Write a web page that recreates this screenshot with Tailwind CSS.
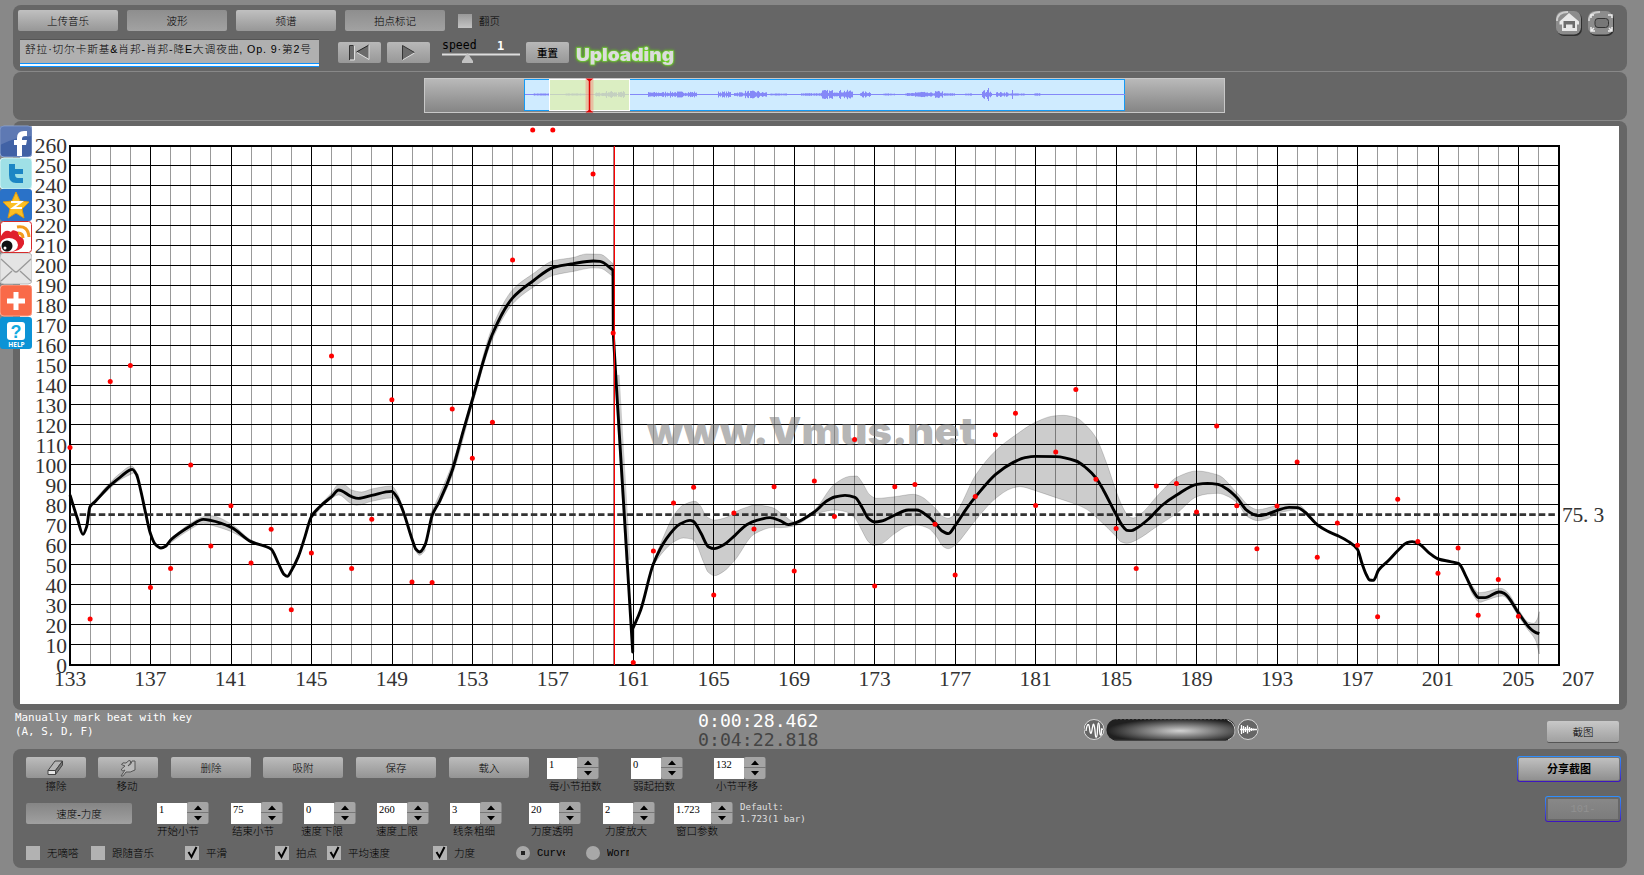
<!DOCTYPE html>
<html lang="zh">
<head>
<meta charset="utf-8">
<title>Vmus.net</title>
<script src="https://cdn.jsdelivr.net/npm/@tailwindcss/browser@4"></script>
</head>
<body class="relative flex h-[875px] w-[1644px] flex-col overflow-hidden bg-[#888888] pt-[5px] pl-[13px] font-['Liberation_Sans','Noto_Sans_CJK_SC',sans-serif] text-[10.5px] leading-none font-light text-black">

<!-- toolbar -->
<header class="flex h-[66px] w-[1614px] justify-between rounded-[8px] bg-[#666666]">
  <div class="pl-[5px] pt-[5px]">
    <div class="flex h-[21px] items-center gap-[9px]">
      <button class="h-[21px] w-[100px] rounded-[2px] bg-linear-to-b from-[#c0c0c0] to-[#979797] pt-px">上传音乐</button>
      <button class="h-[21px] w-[100px] rounded-[2px] bg-linear-to-b from-[#8e8e8e] to-[#a2a2a2] pt-px">波形</button>
      <button class="h-[21px] w-[100px] rounded-[2px] bg-linear-to-b from-[#c0c0c0] to-[#979797] pt-px">频谱</button>
      <button class="h-[21px] w-[100px] rounded-[2px] bg-linear-to-b from-[#8e8e8e] to-[#a2a2a2] pt-px">拍点标记</button>
      <span class="ml-1 size-[14px] bg-linear-to-b from-[#999] to-[#c4c4c4]"></span>
      <span class="-ml-[2px] pt-px">翻页</span>
    </div>
    <div class="mt-[8px] flex pl-[2px]">
      <div class="h-[28px] w-[299px] border-t border-b border-t-[#555] border-b-[#0a91ff] bg-[#b0b0b0] pt-[3px] pl-[5px] text-[10.7px] whitespace-pre shadow-[inset_0_-2px_0_#f4faff,inset_0_-3px_0_#0a91ff]"><svg class="overflow-visible" width="290" height="14"><text x="0" y="10" textLength="286" lengthAdjust="spacing">舒拉·切尔卡斯基&amp;肖邦-肖邦-降E大调夜曲, Op. 9·第2号</text></svg></div>
      <button class="mt-[3px] ml-[19px] h-[21px] w-[43px] rounded-[2px] bg-linear-to-b from-[#b8b8b8] to-[#989898]">
        <svg width="43" height="21"><path d="M11.500 18V3.500h4" fill="none" stroke="#333"/><path d="M12 4h4v13.500h-4z" fill="#6b6b6b"/><path d="M31 3 18.500 10l12.500 7z" fill="#6b6b6b"/><path d="M31 3 18.500 10" stroke="#222"/><path d="M31 3v14.500L19 10.500M16.500 4v14H12" fill="none" stroke="#ddd"/></svg>
      </button>
      <button class="mt-[3px] ml-[6px] h-[21px] w-[43px] rounded-[2px] bg-linear-to-b from-[#b8b8b8] to-[#989898]">
        <svg width="43" height="21"><path d="M15.500 3.500v14.500l12-7.500z" fill="#6b6b6b"/><path d="M15.500 18V3.500l12 7" fill="none" stroke="#333"/><path d="M15.500 18l12-7" stroke="#ddd"/></svg>
      </button>
      <svg class="ml-[10px] overflow-visible font-['DejaVu_Sans_Mono',monospace]" width="90" height="28"><text x="2" y="10" font-size="11.5">speed</text><text x="57" y="10.500" font-size="12" fill="#fff" font-weight="bold">1</text><path d="M2 15.500h78" stroke="#ddd" stroke-width="2"/><path d="M27.500 14l5.500 8v2H22v-2z" fill="#c2c2c2"/></svg>
      <button class="mt-[3px] -ml-[4px] h-[21px] w-[43px] rounded-[2px] bg-linear-to-b from-[#b8b8b8] to-[#989898] pt-px font-medium">重置</button>
      <svg class="overflow-visible drop-shadow-[0_0_1.5px_#5fe000]" width="110" height="28"><text x="7" y="22" font-family="Inter" font-weight="900" font-size="18" textLength="98" lengthAdjust="spacingAndGlyphs" fill="#dcdcdc" stroke="#78d838" stroke-width="1.500" paint-order="stroke" stroke-opacity=".6">Uploading</text></svg>
    </div>
  </div>
  <div class="flex gap-[6px] pt-[6px] pr-[13px]">
    <svg width="26" height="25"><rect x="1" y="1" width="25" height="24" rx="7" fill="#2f2f2f"/><rect width="25" height="23.500" rx="7" fill="#8c8c8c"/><path d="M1 10Q1 1 12 1" fill="none" stroke="#ccc" stroke-width="2"/><path d="M13 2 3.500 10.500v3H6V20h15v-6.500h2v-3z" fill="#e8e8e8"/><path d="M7.500 10h11.500v7h-2.500v-3.500h-6.500V17H7.500z" fill="#6c6c6c"/></svg>
    <svg width="26" height="25"><rect x="1" y="1" width="25" height="24" rx="7" fill="#2f2f2f"/><rect width="25" height="23.500" rx="7" fill="#8c8c8c"/><path d="M1 10Q1 1 12 1" fill="none" stroke="#ccc" stroke-width="2"/><rect x="7" y="7.500" width="13.500" height="9" rx="3" fill="#777" stroke="#333"/><path d="M3 7V4h3M24 7V4h-4M3 16v4h4M24 16v4h-4M3 20l3-3M24 20l-3-3" fill="none" stroke="#eee" stroke-width="1.500"/></svg>
  </div>
</header>

<!-- overview strip -->
<section class="mt-px h-[48px] w-[1614px] rounded-[8px] bg-[#666666] pt-[6px] pl-[411px]">
  <div class="h-[35px] w-[801px] border border-[#c8c8c8] bg-linear-to-b from-[#b9b9b9] to-[#858585]">
    <svg id="overview" class="overflow-visible" width="799" height="33">
      <rect x="99.500" y=".5" width="600" height="31" fill="#cfebff" stroke="#149af5"/>
      <path id="wave" stroke="#8488f8" fill="none"/>
      <rect x="124.500" y=".5" width="80" height="31" fill="#e0f0a8" fill-opacity=".7" stroke="#fff"/>
      <path d="M164.500 0v33" stroke="#f66" stroke-opacity=".35" stroke-width="8"/>
      <path d="M164.500 0v33" stroke="#e00000" stroke-width="1.500"/><path d="M160.500-.5h8l-4 3zM160.500 33.500h8l-4-3z" fill="#e00000"/>
    </svg>
  </div>
</section>

<!-- tempo chart -->
<main class="mt-px h-[589px] w-[1614px] rounded-[8px] bg-[#666666] pt-[5px] pl-[7px]">
  <svg id="chart" class="bg-white font-['Liberation_Serif',serif]" width="1599" height="578" viewBox="20 126 1599 578">
    <g id="grid" shape-rendering="crispEdges"></g>
    <rect x="70" y="146" width="1489" height="519" fill="none" stroke="#000" stroke-width="2"/>
    <text x="647" y="445" font-family="Inter" font-weight="900" font-size="38" textLength="329" lengthAdjust="spacingAndGlyphs" fill="#777" fill-opacity=".55">www.Vmus.net</text>
    <g id="bands" fill="#000" fill-opacity=".2" stroke="#000" stroke-opacity=".2" stroke-width=".8"></g>
    <path d="M70 514.700H1558" stroke="#333" stroke-width="2.800" stroke-dasharray="6.500 3.100"/>
    <path id="tempo" fill="none" stroke="#000" stroke-width="2.900" stroke-linejoin="round"/>
    <path d="M614.400 146v519" stroke="#f00" stroke-width="1.200"/>
    <g id="dots" fill="#ff0000"></g>
    <g id="labels" font-size="21.500" fill="#333"></g>
    <text x="1562 1572.500 1583 1593.500" y="521.500" font-size="21.500" fill="#333">75.3</text>
  </svg>
</main>

<!-- status row -->
<section class="flex h-[39px] w-[1614px] font-['DejaVu_Sans_Mono',monospace]">
  <div class="w-[683px] pt-[1px] pl-[2px] text-[10.900px] leading-[14px] text-white">Manually mark beat with key<br>(A, S, D, F)</div>
  <div class="w-[388px] pt-px pl-[2px] text-[18.200px] leading-[19px] text-white">0:00:28.462<br><span class="text-[#444]">0:04:22.818</span></div>
  <svg width="180" height="39">
    <g fill="#666" stroke="#d8d8d8" stroke-width="1"><circle cx="10" cy="19.500" r="10"/><circle cx="164" cy="19.500" r="10"/></g>
    <path d="M2 21C3 13 5 13 5.500 18S7 26 8 20 9.500 12 10.500 17 11 28 12.500 27 13 13 14.500 13 15 24 16.500 25 17 15 18.500 20" fill="none" stroke="#fff" stroke-width="1.300"/>
    <path d="M157.500 15v9M159.500 16v7M161.500 17v5M163.500 15.500v8M165.500 17v5M167.500 18v3M169.500 18.500v2M156 19.500h17" stroke="#fff" stroke-width="1.300"/>
    <defs><radialGradient id="knob" cx=".57" cy=".55" r=".57"><stop offset="0" stop-color="#d2d2d2"/><stop offset="1" stop-color="#202020"/></radialGradient></defs>
    <rect x="22.500" y="9" width="129" height="21.500" rx="10" fill="url(#knob)"/><path d="M32 9.500h109" stroke="#444" stroke-dasharray="2 2"/><path d="M30 30h112" stroke="#333"/><path d="M143.500 10q7 3 7.500 10t-7 10" fill="none" stroke="#ccc"/>
  </svg>
  <button class="mt-[11px] ml-[283px] h-[21px] w-[72px] rounded-[2px] bg-linear-to-b from-[#c8c8c8] to-[#a0a0a0] pt-px font-['Noto_Sans_CJK_SC',sans-serif] text-[10.500px] leading-none shadow-[0_1px_0_#555]">截图</button>
</section>

<!-- control panel -->
<footer class="flex h-[119px] w-[1614px] justify-between rounded-[8px] bg-[#666666]">
  <div class="pl-[13px]">
    <div class="flex h-[45px] pt-[8px]">
      <div class="w-[72px]">
        <button class="block h-[21px] w-[60px] rounded-[2px] bg-linear-to-b from-[#bcbcbc] to-[#949494]"><svg width="60" height="21"><path d="M22 13.500 29 4h7.500l-7 9.500z" fill="#b5b5b5" stroke="#444"/><path d="M22 13.500h7.500v4H22z" fill="#e5e5e5" stroke="#444"/><path d="M29.500 13.500l7-9.500v4l-7 9.500z" fill="#777" stroke="#444"/></svg></button>
        <div class="w-[60px] pt-[3px] text-center">擦除</div>
      </div>
      <div class="w-[73px]">
        <button class="block h-[21px] w-[60px] rounded-[2px] bg-linear-to-b from-[#bcbcbc] to-[#949494]"><svg width="60" height="21"><path d="M23 19l4-6q-4 2-3.500-1L27 9l-3.500-1.500Q24 5 28 6l3-2.500q2-.5 1.500 2.500L30 9q4-2 4-5h3v9q-5 3-9 2l-3 4z" fill="#b9b9b9" stroke="#555"/></svg></button>
        <div class="w-[58px] pt-[3px] text-center">移动</div>
      </div>
      <button class="h-[21px] w-[80px] rounded-[2px] bg-linear-to-b from-[#bcbcbc] to-[#949494] pt-px">删除</button>
      <button class="ml-[12px] h-[21px] w-[80px] rounded-[2px] bg-linear-to-b from-[#bcbcbc] to-[#949494] pt-px">吸附</button>
      <button class="ml-[13px] h-[21px] w-[80px] rounded-[2px] bg-linear-to-b from-[#bcbcbc] to-[#949494] pt-px">保存</button>
      <button class="ml-[13px] h-[21px] w-[80px] rounded-[2px] bg-linear-to-b from-[#bcbcbc] to-[#949494] pt-px">载入</button>
      <div id="row1" class="ml-[18px] grid grid-cols-[84px_83px_90px]"></div>
    </div>
    <div class="flex h-[46px] pt-[8px]">
      <button class="mt-px h-[21px] w-[106px] rounded-[2px] bg-linear-to-b from-[#858585] to-[#a0a0a0] pt-px">速度-力度</button>
      <div id="row2" class="ml-[25px] grid grid-cols-[74px_73px_73px_73px_79px_74px_71px_66px]"></div>
      <div class="-mt-px font-['DejaVu_Sans_Mono',monospace] text-[9.100px] leading-[12px] text-[#e0e0e0]">Default:<br>1.723(1 bar)</div>
    </div>
    <div id="row3" class="flex h-[25px] items-center"></div>
  </div>
  <div class="flex flex-col items-end pt-[7px] pr-[6px]">
    <div class="h-[26px] w-[104px] rounded-[3px] bg-linear-to-b from-[#2e90ff] to-[#3c10c0] p-px"><button class="h-[24px] w-[102px] rounded-[2px] border border-[#777] bg-linear-to-b from-[#c0c0c0] to-[#909090] pt-px text-[11px] font-bold">分享截图</button></div>
    <div class="mt-[14px] h-[26px] w-[76px] rounded-[3px] bg-linear-to-b from-[#2e90ff] to-[#3c10c0] p-px"><button class="h-[24px] w-[74px] rounded-[2px] border-2 border-[#686868] bg-linear-to-b from-[#888] to-[#7c7c7c] font-['Liberation_Mono',monospace] text-[#919191]">101-</button></div>
  </div>
</footer>

<!-- share bar floating over the left edge -->
<nav class="absolute top-[125px] left-0 flex w-8 flex-col">
  <svg width="32" height="32"><rect width="32" height="31" y="1" rx="4" fill="#4162a5" stroke="#8ba3cf"/><path d="M0 1h32v10Q15 12 0 20z" fill="#7189bd" opacity=".6"/><path d="M17 31V20h-3v-5h3v-2q0-7 7-7h3v5h-2q-3 0-3 3v1h5l-1 5h-4v11z" fill="#fff"/></svg>
  <svg width="32" height="32"><rect width="32" height="31" y="1" rx="4" fill="#9fe0e6" stroke="#d5f5f6"/><path d="M9 7h6v5h8v5h-8q0 4 3 4h5v5h-7q-7 0-7-8z" fill="#1c86c4"/></svg>
  <svg width="32" height="32"><rect width="32" height="32" rx="3" fill="#2a72c8"/><path d="M16 3l4 9 9 1-7 7 2 9-8-5-8 5 2-9-7-7 9-1z" fill="#fbbf24" stroke="#e09a10"/><path d="M11 13h10l-8 6h9" fill="none" stroke="#fff" stroke-width="2"/></svg>
  <svg width="32" height="32"><rect x=".5" y=".5" width="31" height="31" rx="3" fill="#fff" stroke="#d52b2b"/><path d="M1 15Q5 7 11 11q1-3 5-1 4 1 3 5 6 2 5 8-3 8-16 8-7-2-7-5z" fill="#e0202c"/><ellipse cx="9" cy="24" rx="9" ry="7" fill="#fff"/><circle cx="7" cy="25" r="5.500" fill="#111"/><circle cx="5" cy="27" r="1.500" fill="#fff"/><path d="M17 6q11-2 12 10M18 12q5 0 5 5" fill="none" stroke="#f29b1e" stroke-width="3"/></svg>
  <svg width="32" height="32"><rect width="32" height="31" rx="4" fill="#e4e4e4" stroke="#bbb"/><path d="M1 28l11-10M31 28 20 18M1 6l13 12q2 2 4 0L31 6" fill="none" stroke="#999" stroke-width="1.300"/></svg>
  <svg width="32" height="32"><rect width="32" height="31" rx="4" fill="#f96a48" stroke="#fca58f"/><path d="M16 7v18M7 16h18" stroke="#fff" stroke-width="5"/></svg>
  <svg width="32" height="32"><rect width="32" height="32" rx="3" fill="#0c93d6"/><rect x="7" y="5" width="18" height="18" rx="3" fill="#fff"/><text x="16" y="20.500" text-anchor="middle" font-size="18" font-weight="bold" font-family="Liberation Sans" fill="#12aadf">?</text><text x="16.500" y="30" text-anchor="middle" font-size="6.500" font-weight="bold" font-family="Open Sans" fill="#fff">HELP</text></svg>
</nav>

<script>
const $ = id => document.getElementById(id);
const bx = beat => 70 + (beat - 133) * 20.117;
const vy = v => 665 - v * 1.9962;

/* grid and axis labels */
let g = '', labels = '';
for (let b = 134; b < 207; b++) {
  const major = (b - 133) % 4 === 0;
  g += `<rect x="${Math.round(bx(b) - .35)}" y="146" width="1" height="519" fill="${major ? '#000' : '#999'}"/>`;
}
for (let v = 10; v < 260; v += 10) g += `<rect x="70" y="${Math.round(vy(v)) - 1}" width="1489" height="1" fill="#000"/>`;
$('grid').innerHTML = g;
for (let v = 0; v <= 260; v += 10) labels += `<text x="67" y="${vy(v) + 7.5}" text-anchor="end">${v}</text>`;
for (let b = 133; b <= 205; b += 4) labels += `<text x="${bx(b)}" y="686" text-anchor="middle">${b}</text>`;
labels += '<text x="1562" y="686">207</text>';
$('labels').innerHTML = labels;

/* beat dots, one y per beat starting from 133 */
const dotY = [447.5,619,381.5,365.5,587.5,568.5,465,546,505.7,563,529.3,609.7,553,356,568.5,519.3,399.7,582,582.5,409,458.3,422.3,260,130,130,null,174,333,662.5,551,503,487.3,595,513,529,486.7,571,481,516.5,439.5,586,486.7,484.5,524.3,575,496.5,434.7,413.3,505.5,452,389.5,479.3,528.5,568.5,486,483.5,512,426,505.7,548.7,506,462,557.3,523,545.3,616.7,499.3,541.5,573.3,548,615.3,579.5,616.3];
$('dots').innerHTML = dotY.map((y, i) => y === null ? '' : `<circle cx="${bx(133 + i)}" cy="${y}" r="2.5"/>`).join('');

/* curve samples are stored in four local frames */
const frame = (ox, oy, sx, sy) => p => p.map(([x, y]) => [ox + x / sx, oy + y / sy]);
const A = frame(60, 380, 3, 3), B = frame(440, 120, 3, 2.8), C = frame(620, 380, 3, 3), D = frame(1100, 380, 2.882, 3);
function smooth(p, cmd) {
  const n = p.length, m = [];
  const s = i => (p[i+1][1] - p[i][1]) / ((p[i+1][0] - p[i][0]) || 1e-6);
  for (let i = 0; i < n; i++) {
    if (i === 0) m.push(s(0)); else if (i === n - 1) m.push(s(n - 2));
    else {
      const a = s(i - 1), b = s(i);
      m.push(a * b <= 0 ? 0 : 2 * a * b / (a + b));
    }
  }
  let d = cmd + p[0];
  for (let i = 0; i < n - 1; i++) {
    const h = (p[i+1][0] - p[i][0]) / 3;
    d += `C${p[i][0] + h},${p[i][1] + m[i] * h} ${p[i+1][0] - h},${p[i+1][1] - m[i+1] * h} ${p[i+1]}`;
  }
  return d;
}
const left = [...A([[30,345],[52,415],[69,463],[80,440],[90,380],[105,365],[150,317],[180,292],[217,268],[230,285],[243,335],[257,400],[271,460],[285,492],[303,504],[318,498],[332,480],[391,438],[430,418],[452,421],[514,442],[573,485],[633,507],[655,550],[672,583],[682,589],[694,572],[715,530],[735,470],[754,410],[785,375],[815,350],[836,330],[875,350],[895,355],[935,346],[995,334],[1010,350],[1030,395],[1057,480],[1068,508],[1079,516],[1095,495],[1117,405]]),
  ...B([[0,1065],[37,980],[70,870],[98,780],[157,600],[218,498],[280,450],[340,413],[400,402],[460,395],[480,396],[519,420]])];
const right = [...C([[40,742],[62,690],[100,552],[140,475],[180,432],[210,421],[220,424],[243,460],[265,500],[283,506],[310,495],[345,466],[380,434],[410,421],[450,413],[480,422],[505,434],[523,430],[583,396],[620,363],[644,351],[675,346],[705,352],[725,380],[745,415],[764,426],[785,423],[825,405],[865,390],[890,390],[925,410],[946,430],[965,452],[985,461],[1006,436],[1040,385],[1067,350],[1127,283],[1180,247],[1215,233],[1246,229],[1308,230],[1368,243],[1400,265],[1429,295],[1450,330]]),
  ...D([[47,405],[65,438],[78,451],[90,452],[105,445],[140,417],[180,375],[221,345],[279,313],[310,310],[340,313],[370,330],[396,355],[420,388],[440,402],[455,407],[480,403],[511,391],[545,382],[569,383],[590,396],[627,435],[655,453],[685,467],[715,484],[742,508],[755,550],[768,585],[777,600],[788,601],[803,570],[830,543],[860,510],[885,488],[900,485],[917,490],[950,520],[975,537],[1010,545],[1034,551],[1055,590],[1075,632],[1091,653],[1110,653],[1150,636],[1165,640],[1207,700],[1235,740],[1255,757],[1266,761]])];
$('tempo').setAttribute('d', smooth(left, 'M') + 'L613.300,334L616.700,391L632.700,652L632.700,629' + smooth(right, 'L'));

const bands = [
  [A([[90,375],[150,308],[180,280],[215,258],[235,285]]), A([[220,279],[180,300],[150,325],[90,385]])],
  [A([[332,475],[391,430],[430,410],[452,407],[514,432],[573,480],[600,492]]), A([[573,489],[514,455],[452,435],[430,430],[391,448],[332,488]])],
  [A([[754,400],[815,338],[836,313],[852,314],[875,330],[905,336],[935,327],[995,318],[1012,340],[1035,400]]), A([[1010,365],[995,354],[935,364],[890,376],[872,370],[836,345],[815,355],[754,415]])],
  [A([[1057,480],[1068,505],[1079,512],[1095,495]]), A([[1095,512],[1079,526],[1068,515],[1057,485]])],
  [[...A([[1110,405]]), ...B([[0,1045],[37,962],[98,768],[157,580],[218,475],[280,430],[340,394],[400,385],[440,375],[480,376],[519,402]])], B([[519,438],[480,415],[460,414],[400,424],[340,435],[280,468],[218,515],[157,615],[98,795],[37,995],[0,1075]])],
  [[...C([[100,545],[135,460],[160,408],[190,375],[225,364],[240,376],[260,410],[283,420],[320,412],[345,396],[385,380],[405,375],[455,382],[490,405],[523,425],[583,390],[644,312],[690,289],[710,288],[725,305],[750,345],[770,355],[825,350],[880,343],[900,348],[946,385],[970,410],[985,415],[1006,400],[1067,285],[1127,212],[1187,165],[1246,127],[1300,108],[1330,106],[1368,113],[1400,138],[1429,175],[1460,250],[1489,335],[1510,385],[1525,408],[1540,414]]), ...D([[105,410],[120,400],[163,350],[195,315],[221,292],[279,273],[340,285],[396,340],[430,378],[455,389],[511,376],[545,371],[569,372],[600,400]])],
   [...D([[569,388],[530,395],[511,401],[480,417],[455,422],[425,410],[396,370],[370,350],[340,340],[310,342],[279,350],[221,400],[163,440],[105,480],[78,490],[60,485],[47,470],[0,422]]), ...C([[1400,388],[1368,373],[1308,353],[1246,332],[1200,320],[1175,325],[1127,355],[1067,420],[1040,455],[1006,495],[985,506],[970,500],[946,465],[925,445],[890,435],[864,438],[825,460],[780,493],[760,496],[745,485],[725,450],[705,415],[680,396],[644,390],[600,398],[583,403],[523,438],[480,443],[463,442],[403,462],[345,540],[310,575],[283,587],[265,577],[250,545],[230,495],[218,478],[190,474],[161,486],[130,515],[100,555]])]],
  [D([[1055,585],[1075,620],[1091,638],[1110,636],[1155,625],[1170,632],[1207,690],[1235,727],[1250,730],[1260,718],[1266,695]]), D([[1266,822],[1255,780],[1230,745],[1207,710],[1160,648],[1110,662],[1095,667],[1075,645],[1055,598]])],
];
$('bands').innerHTML = bands.map(([u, l]) => `<path d="${smooth(u, 'M')}${smooth(l, 'L')}Z"/>`).join('') +
  '<path d="M617 375L628 560" fill="none" stroke-width="5"/>';

/* overview waveform: [from, to, amplitude] in strip pixels */
const env = [[108,125,.6],[140,160,.6],[170,180,1.5],[180,192,3],[193,200,3],[223,240,2],[240,272,2.5],[293,306,2.5],[309,320,2],[320,335,3.2],[335,342,2],[345,362,.5],[376,396,1],[396,408,4],[408,428,4],[435,446,2.5],[458,470,.6],[480,490,1],[490,500,2.5],[500,510,1.5],[510,518,3],[518,530,.8],[540,547,.6],[557,567,4],[571,583,2],[583,600,.7],[609,616,.8]];
let w = 'M100 15.500H700', seed = 7;
for (const [a, b, h] of env) for (let x = a; x < b; x++) {
  seed = (seed * 16807) % 2147483647;
  const r = .5 + h * (.25 + .8 * seed / 2147483647);
  w += `M${x + .5} ${15.5 - r}v${2 * r}`;
}
w += 'M563.500 9v13M587.500 11v9';
$('wave').setAttribute('d', w);

/* numeric steppers: [value, label, label offset] */
const stepper = ([v, t, off], wide) => `<div><div class="flex h-[22px]">
  <div class="${wide ? 'w-[37px]' : 'w-[30px]'} mt-px h-[21px] bg-white pt-[2px] pl-[2px] font-['Liberation_Serif'] text-[10.500px]">${v}</div>
  <svg width="22" height="22"><rect width="21.500" height="22" rx="2" fill="#a5a5a5"/><path d="M0 10.500h22" stroke="#777"/><path d="M7 8l4-4.500 4 4.500zM7 14l4 4.500 4-4.500z" fill="#000"/></svg></div>
  <div class="pt-[2px] whitespace-nowrap" style="margin-left:${off}px">${t}</div></div>`;
$('row1').innerHTML = [['1','每小节拍数',2],['0','弱起拍数',2],['132','小节平移',2]].map(s => stepper(s)).join('');
$('row2').innerHTML = [['1','开始小节',0],['75','结束小节',1],['0','速度下限',-3],['260','速度上限',-1],['3','线条粗细',3],['20','力度透明',2],['2','力度放大',2],['1.723','窗口参数',2]].map((s, i) => stepper(s, i === 7)).join('');

/* toggles: [kind, checked, label, slot width, label clip] */
const toggle = ([kind, on, t, width, clip]) => `<div class="flex shrink-0 items-center gap-[7px]" style="width:${width}px">` +
  (kind === 'box'
    ? `<svg width="14" height="14"><rect width="14" height="14" fill="#b2b2b2"/>${on ? '<path d="M3.500 6l3 5 5-10" fill="none" stroke="#000" stroke-width="2"/>' : ''}</svg>`
    : `<svg width="14" height="14"><circle cx="7" cy="7" r="7" fill="#a8a8a8"/>${on ? '<rect x="5" y="5" width="4" height="4" fill="#222"/>' : ''}</svg>`) +
  `<span class="overflow-hidden whitespace-nowrap leading-[14px] ${kind === 'dot' ? "font-['Liberation_Mono']" : ''}" ${clip ? `style="width:${clip}px"` : ''}>${t}</span></div>`;
$('row3').innerHTML = [['box',0,'无嘀嗒',65],['box',0,'跟随音乐',94],['box',1,'平滑',90],['box',1,'拍点',52],['box',1,'平均速度',106],['box',1,'力度',83],['dot',1,'Curve',70,28],['dot',0,'Worm',60,22]].map(toggle).join('');
</script>
</body>
</html>
